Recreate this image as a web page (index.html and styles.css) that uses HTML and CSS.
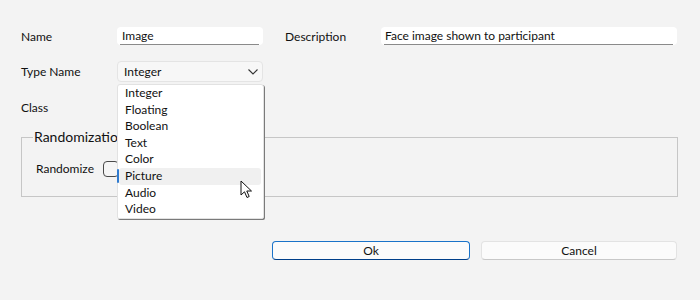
FILE: index.html
```html
<!DOCTYPE html>
<html>
<head>
<meta charset="utf-8">
<link rel="stylesheet" href="styles.css">
</head>
<body>
<div class="dialog">
  <div class="form">
    <div class="label">Name</div>
    <div class="input name-input"><span>Image</span></div>
    <div class="spacer"></div>
    <div class="label">Description</div>
    <div class="input desc-input"><span>Face image shown to participant</span></div>

    <div class="label row2">Type Name</div>
    <div class="combo-wrap row2">
      <div class="combo">
        <span>Integer</span>
        <svg class="chev" width="10" height="6" viewBox="0 0 10 6"><path d="M0.5 0.5 L5 5 L9.5 0.5" fill="none" stroke="#333" stroke-width="1.1"/></svg>
      </div>
      <div class="popup">
        <div class="item">Integer</div>
        <div class="item">Floating</div>
        <div class="item">Boolean</div>
        <div class="item">Text</div>
        <div class="item">Color</div>
        <div class="item hover">Picture</div>
        <div class="item">Audio</div>
        <div class="item">Video</div>
        <svg class="cursor" width="14" height="20" viewBox="0 0 14 20"><path d="M1 1 L1 15 L4.5 11.8 L7 17.5 L9.2 16.5 L6.8 11 L11.5 11 Z" fill="#fff" stroke="#111" stroke-width="1" stroke-linejoin="round"/></svg>
      </div>
    </div>

    <div class="label row3">Class</div>
  </div>

  <fieldset class="group">
    <legend>Randomization</legend>
    <div class="group-row">
      <span class="label rand-label">Randomize</span>
      <span class="checkbox"></span>
    </div>
  </fieldset>

  <div class="buttons">
    <div class="btn primary">Ok</div>
    <div class="btn">Cancel</div>
  </div>
</div>
</body>
</html>
```

FILE: styles.css
```css
html, body {
  margin: 0;
  padding: 0;
  background: #f3f3f3;
  width: 700px;
  height: 300px;
  overflow: hidden;
}
body {
  font-family: Lato, "Noto Sans", sans-serif;
  font-size: 12px;
  color: #111;
}
.dialog {
  padding: 27px 22px 0 21px;
}
.form {
  display: grid;
  grid-template-columns: 96px 146px 22px 96px 296px;
  grid-template-rows: 18px 21px 18px;
  row-gap: 16px;
  align-items: center;
}
.form .row3 { grid-row: 3; grid-column: 1; margin-top: 1px; }
.form .row2 { grid-row: 2; }
.label {
  line-height: 18px;
  padding-top: 1px;
  white-space: nowrap;
}
.input {
  height: 18px;
  background: #fff;
  border-radius: 4px;
  position: relative;
  line-height: 18px;
  box-sizing: border-box;
}
.input::after {
  content: "";
  position: absolute;
  left: 3px;
  right: 4px;
  bottom: 0;
  height: 1px;
  background: #8a8a8a;
}
.name-input { padding-left: 5px; }
.desc-input { padding-left: 4px; }
.combo-wrap {
  position: relative;
  height: 21px;
}
.combo {
  height: 21px;
  box-sizing: border-box;
  border: 1px solid #e4e4e4;
  border-radius: 4px;
  background: #f7f7f7;
  display: flex;
  align-items: center;
  justify-content: space-between;
  padding: 0 4px 0 6px;
}
.chev { margin-top: 1px; }
.popup {
  position: absolute;
  left: 0;
  top: 23px;
  width: 147px;
  height: 135px;
  box-sizing: border-box;
  background: #fff;
  border: 1px solid #e2e2e2;
  border-radius: 3px 3px 2px 2px;
  box-shadow: 1px 1px 0 #7a7a7a;
  z-index: 5;
}
.item {
  height: 16.6px;
  line-height: 16px;
  padding-left: 6px;
  margin: 0 2px 0 1px;
  position: relative;
  border-radius: 3px;
}
.item.hover {
  background: #f0f0f0;
}
.item.hover::before {
  content: "";
  position: absolute;
  left: -2px;
  top: 1px;
  width: 1.5px;
  height: 14px;
  background: #2f7bd0;
  border-radius: 1px;
}
.cursor {
  position: absolute;
  left: 122px;
  top: 95px;
}
.group {
  margin: 12px 0 0 0;
  width: 657px;
  height: 69px;
  box-sizing: border-box;
  border: 1px solid #c6c6c6;
  padding: 0 0 0 14px;
  position: relative;
}
.group legend {
  font-size: 14px;
  padding: 0 1px;
  margin-left: -3px;
  line-height: 18px;
}
.group-row {
  display: flex;
  align-items: center;
  margin-top: 13px;
}
.rand-label {
  width: 67px;
}
.checkbox {
  width: 14px;
  height: 14px;
  border: 1px solid #4a4a4a;
  border-radius: 4px;
  background: #f5f5f5;
}
.buttons {
  display: flex;
  gap: 11px;
  margin: 44px 0 0 251px;
}
.btn {
  box-sizing: border-box;
  height: 19px;
  line-height: 17px;
  text-align: center;
  background: #fbfbfb;
  border: 1px solid #e3e3e3;
  border-bottom-color: #c8c8c8;
  border-radius: 4px;
}
.btn.primary {
  width: 198px;
  border: 1px solid #1a73c9;
  border-bottom-color: #003f8a;
}
.btn:not(.primary) {
  width: 196px;
}
```
